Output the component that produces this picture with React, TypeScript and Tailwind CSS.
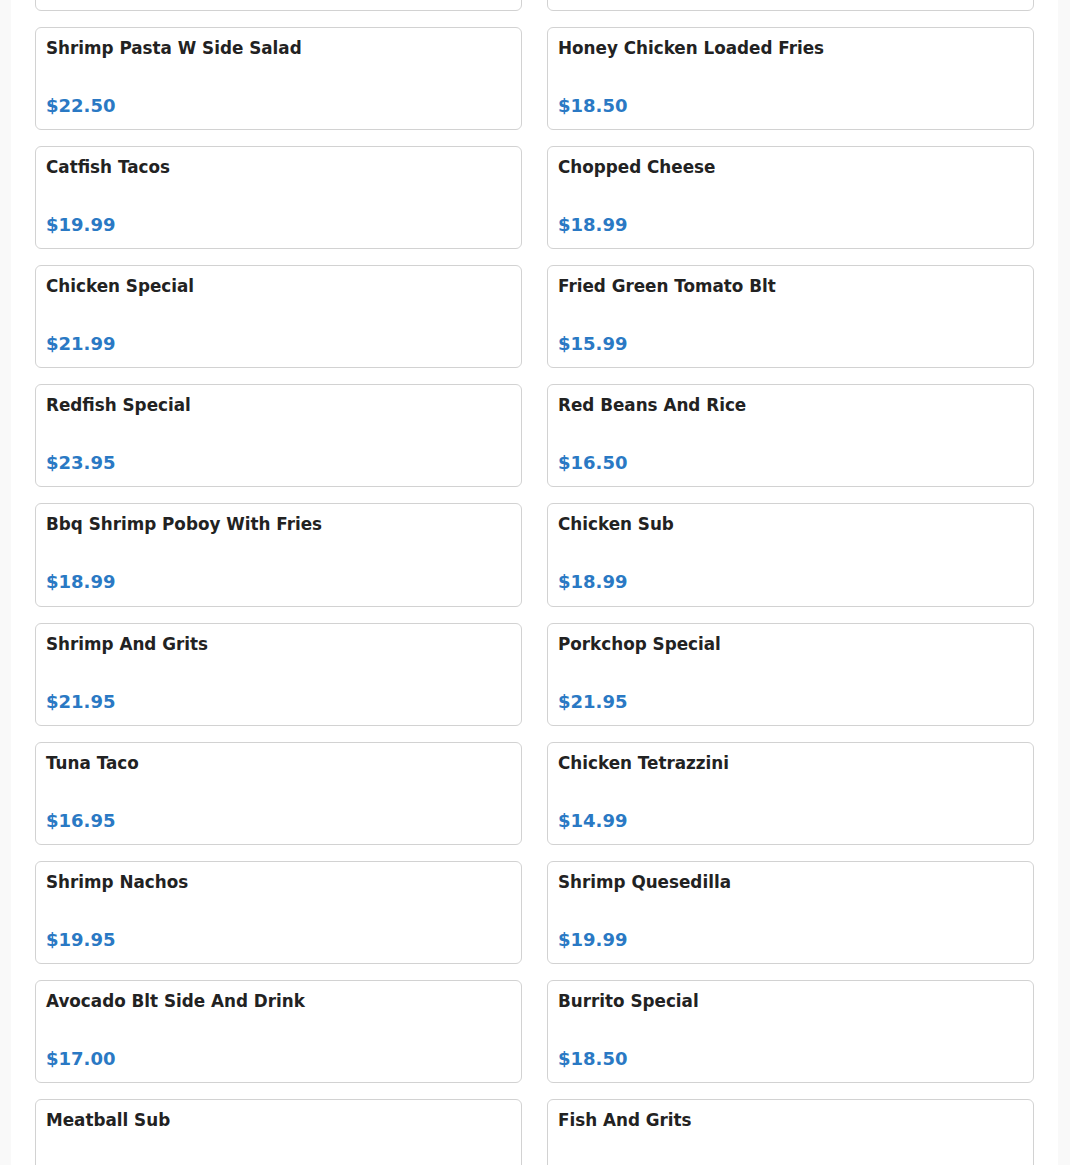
import React from "react";

const items: [string, string][] = [
  ["Shrimp Pasta W Side Salad", "$22.50"],
  ["Honey Chicken Loaded Fries", "$18.50"],
  ["Catfish Tacos", "$19.99"],
  ["Chopped Cheese", "$18.99"],
  ["Chicken Special", "$21.99"],
  ["Fried Green Tomato Blt", "$15.99"],
  ["Redfish Special", "$23.95"],
  ["Red Beans And Rice", "$16.50"],
  ["Bbq Shrimp Poboy With Fries", "$18.99"],
  ["Chicken Sub", "$18.99"],
  ["Shrimp And Grits", "$21.95"],
  ["Porkchop Special", "$21.95"],
  ["Tuna Taco", "$16.95"],
  ["Chicken Tetrazzini", "$14.99"],
  ["Shrimp Nachos", "$19.95"],
  ["Shrimp Quesedilla", "$19.99"],
  ["Avocado Blt Side And Drink", "$17.00"],
  ["Burrito Special", "$18.50"],
  ["Meatball Sub", "$16.99"],
  ["Fish And Grits", "$19.99"],
];

export default function App() {
  return (
    <div
      className="bg-[#f9f9f9] pl-[11px] pr-[12px] h-[1165px] overflow-hidden"
      style={{ fontFamily: '"DejaVu Sans", sans-serif' }}
    >
      <div className="bg-white px-[24px] h-full overflow-hidden">
        <div className="grid grid-cols-2 gap-x-[25px] gap-y-[16px] mt-[-92px]">
          <div className="h-[103.1px] border border-[#d2d2d2] rounded-[6px]" />
          <div className="h-[103.1px] border border-[#d2d2d2] rounded-[6px]" />
          {items.map(([name, price], i) => (
            <div
              key={i}
              className="h-[103.1px] border border-[#d2d2d2] rounded-[6px] px-[10px] pt-[10px] flex flex-col"
            >
              <div className="text-[16.8px] leading-[20px] font-bold text-[#222222]">
                {name}
              </div>
              <div className="mt-[36px] text-[18px] leading-[24px] font-bold text-[#2a79c4]">
                {price}
              </div>
            </div>
          ))}
        </div>
      </div>
    </div>
  );
}
